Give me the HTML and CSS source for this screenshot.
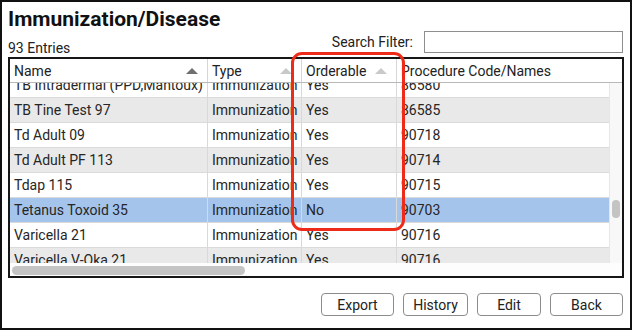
FILE: index.html
```html
<!DOCTYPE html>
<html lang="en">
<head>
    <meta charset="UTF-8">
    <title>Immunization/Disease</title>
    <link rel="stylesheet" href="styles.css">
</head>
<body>
    <div class="window">
        <h1 class="title">Immunization/Disease</h1>
        <div class="toolbar">
            <span class="count">93 Entries</span>
            <label class="filter">Search Filter:<input type="text"></label>
        </div>
        <div class="grid">
            <div class="grid-head">
                <div class="th">Name<i class="arrow on"></i></div>
                <div class="th">Type<i class="arrow"></i></div>
                <div class="th">Orderable<i class="arrow"></i></div>
                <div class="th last">Procedure Code/Names</div>
            </div>
            <div class="grid-main">
                <div class="rows">
                    <div class="row"><span>TB Intradermal (PPD,Mantoux)</span><span>Immunization</span><span>Yes</span><span>86580</span></div>
                    <div class="row alt"><span>TB Tine Test 97</span><span>Immunization</span><span>Yes</span><span>86585</span></div>
                    <div class="row"><span>Td Adult 09</span><span>Immunization</span><span>Yes</span><span>90718</span></div>
                    <div class="row alt"><span>Td Adult PF 113</span><span>Immunization</span><span>Yes</span><span>90714</span></div>
                    <div class="row"><span>Tdap 115</span><span>Immunization</span><span>Yes</span><span>90715</span></div>
                    <div class="row selected"><span>Tetanus Toxoid 35</span><span>Immunization</span><span>No</span><span>90703</span></div>
                    <div class="row"><span>Varicella 21</span><span>Immunization</span><span>Yes</span><span>90716</span></div>
                    <div class="row alt"><span>Varicella V-Oka 21</span><span>Immunization</span><span>Yes</span><span>90716</span></div>
                </div>
                <div class="vscroll"><div class="vthumb"></div></div>
            </div>
            <div class="hscroll"><div class="hthumb"></div></div>
        </div>
        <div class="actions">
            <button class="btn wide">Export</button>
            <button class="btn mid">History</button>
            <button class="btn">Edit</button>
            <button class="btn wide">Back</button>
        </div>
        <div class="callout"></div>
    </div>
</body>
</html>
```
FILE: styles.css
```css
*{
    margin: 0;
    padding: 0;
    box-sizing: border-box;
}
body{
    font-family: Roboto, "Liberation Sans", sans-serif;
    font-size: 14px;
    color: #222;
    background: #fff;
}
.window{
    position: relative;
    width: 632px;
    height: 330px;
    border: 2px solid #111;
    padding: 6px 6px 0 6px;
}
.title{
    font-size: 21px;
    font-weight: 700;
    line-height: 23px;
    color: #111;
}
.toolbar{
    display: flex;
    justify-content: space-between;
    align-items: center;
    height: 22px;
}
.count{
    align-self: flex-end;
    line-height: 16px;
    margin-bottom: -3px;
}
.filter{
    display: flex;
    align-items: center;
    margin-right: 1px;
}
.filter input{
    width: 199px;
    height: 22px;
    margin-left: 11px;
    border: 1px solid #8e8e8e;
    background: #fff;
    outline: none;
}
.grid{
    margin-top: 4px;
    border: 2px solid #161616;
}
.grid-head{
    display: grid;
    grid-template-columns: 198px 94px 95px 1fr;
    height: 24px;
    border-bottom: 1px solid #b8b8b8;
}
.th{
    display: flex;
    justify-content: space-between;
    align-items: center;
    padding: 1px 9px 0 4px;
    line-height: 22px;
    border-right: 1px solid #d6d6d6;
}
.th.last{
    border-right: none;
}
.arrow{
    width: 0;
    height: 0;
    border-left: 6px solid transparent;
    border-right: 6px solid transparent;
    border-bottom: 6px solid #c9c9c9;
}
.arrow.on{
    border-bottom-color: #6f6f6f;
}
.grid-main{
    display: flex;
    height: 180px;
}
.rows{
    flex: 1;
    overflow: hidden;
}
.row{
    display: grid;
    grid-template-columns: 198px 94px 95px 1fr;
    height: 25px;
    border-bottom: 1px solid #dadada;
    background: #fff;
}
.row:first-child{
    margin-top: -10px;
}
.row.alt{
    background: #e9e9e9;
}
.row.selected{
    background: #a5c4ec;
}
.row span{
    padding: 1px 0 0 4px;
    line-height: 23px;
    white-space: nowrap;
    overflow: hidden;
    border-right: 1px solid #d9d9d9;
    color: #262626;
}
.row span:last-child{
    border-right: none;
}
.vscroll{
    width: 13px;
    background: #f8f8f8;
    border-left: 1px solid #e6e6e6;
}
.vthumb{
    width: 8px;
    height: 18px;
    margin: 117px 0 0 2px;
    border-radius: 4px;
    background: #c4c4c4;
}
.hscroll{
    height: 13px;
    padding: 3px 0 0 2px;
    background: #fdfdfd;
}
.hthumb{
    width: 233px;
    height: 9px;
    border-radius: 5px;
    background: #c4c4c4;
}
.actions{
    display: flex;
    justify-content: flex-end;
    gap: 9px;
    margin: 15px 1px 0 0;
}
.btn{
    width: 64px;
    height: 23px;
    font-family: Roboto, "Liberation Sans", sans-serif;
    font-size: 14px;
    color: #222;
    background: #fff;
    border: 1px solid #8c8c8c;
    border-radius: 4px;
}
.btn.mid{
    width: 65px;
}
.btn.wide{
    width: 73px;
}
.callout{
    position: absolute;
    left: 289px;
    top: 50px;
    width: 114px;
    height: 179px;
    border: 3px solid #ee2b18;
    border-radius: 11px;
}
```
